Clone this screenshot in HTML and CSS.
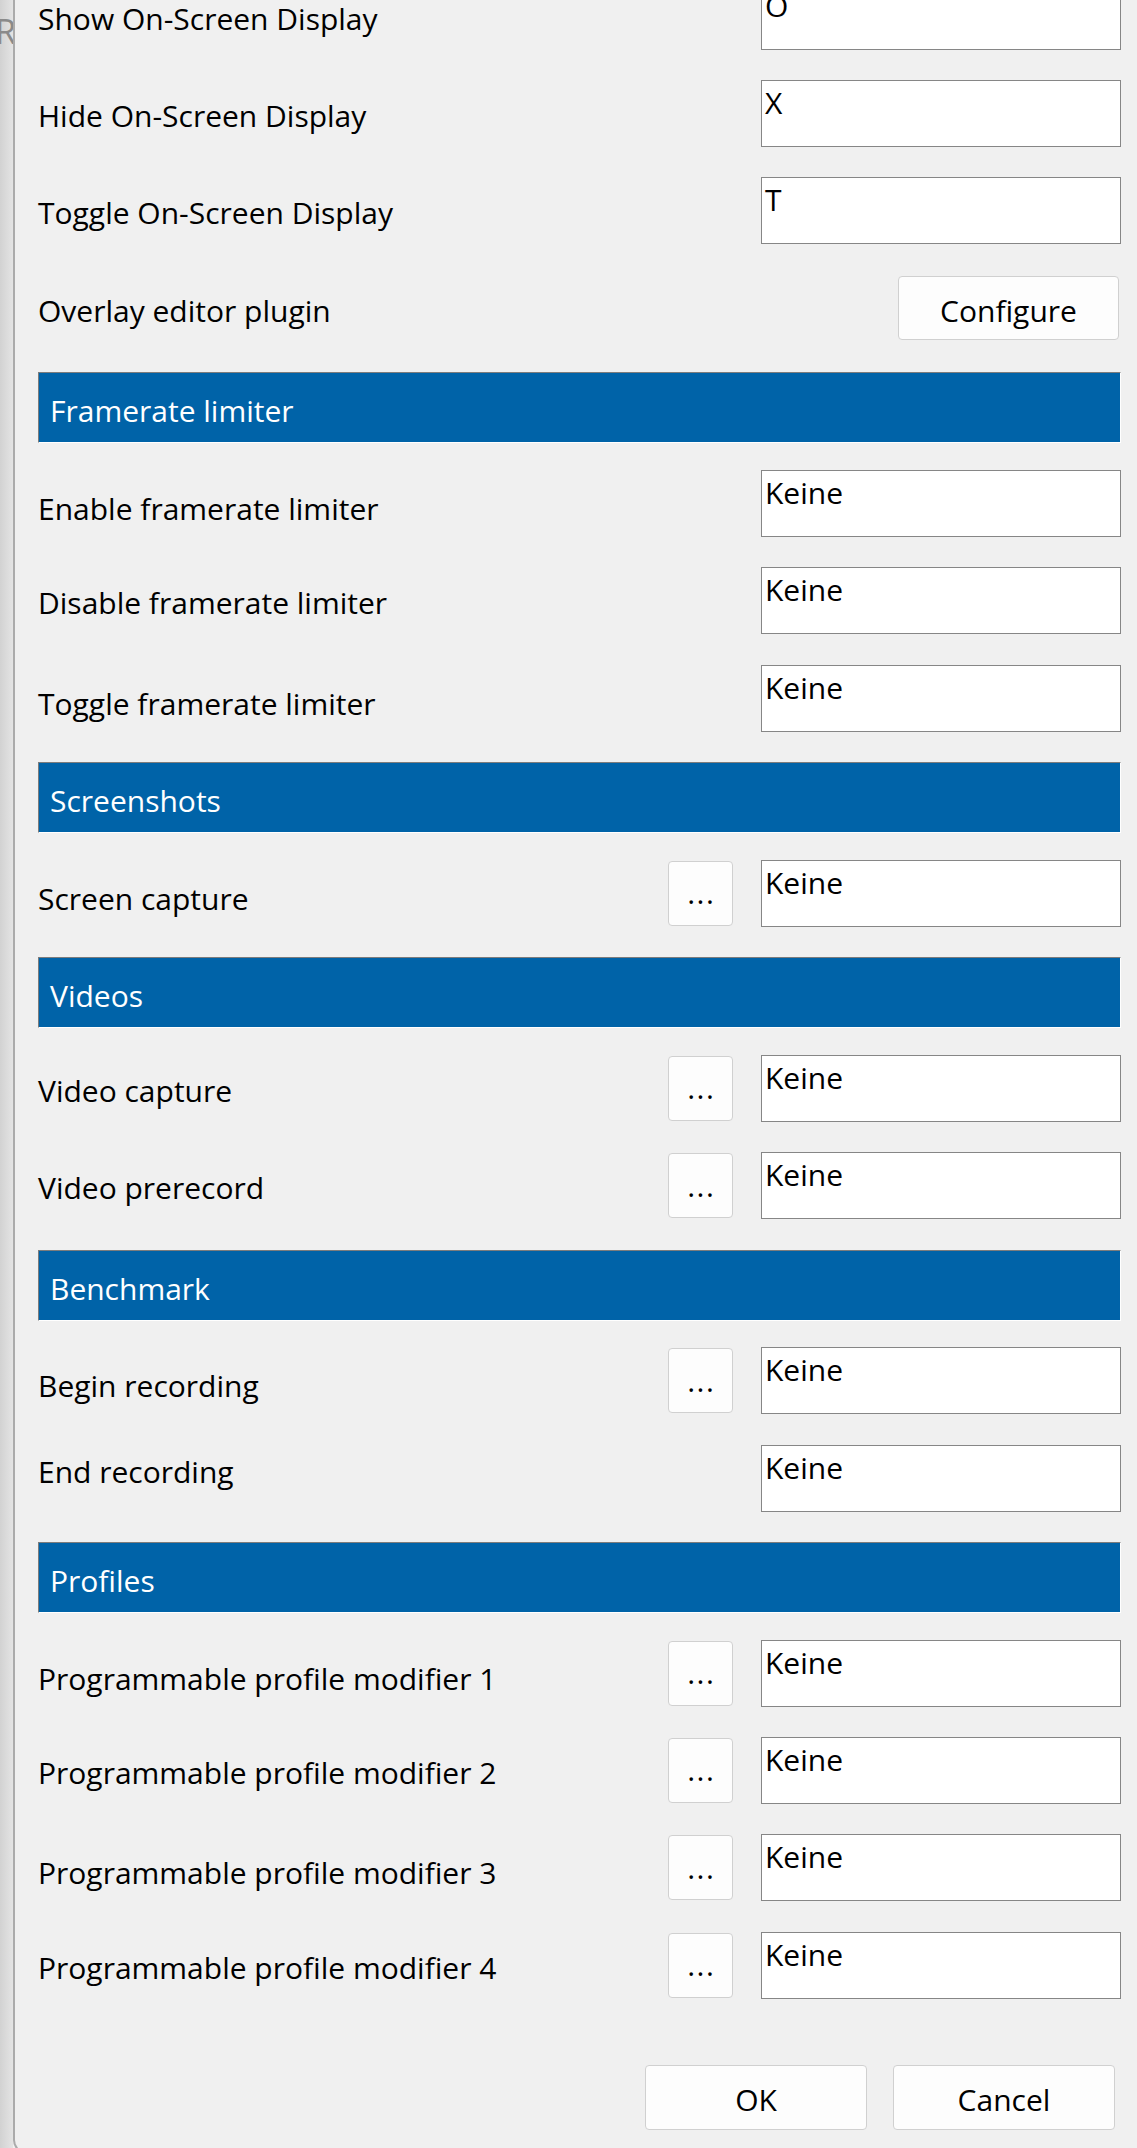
FILE: index.html
```html
<!DOCTYPE html>
<html lang="en">
<head>
<meta charset="utf-8">
<title>Hotkeys</title>
<link rel="stylesheet" href="styles.css">
</head>
<body>
<div class="screen">
  <div class="backwin"><span class="ghost">R</span></div>
  <div class="dialog">
    <div class="rows">
      <div class="row"><span class="label">Show On-Screen Display</span><div class="field">O</div></div>
      <div class="row"><span class="label">Hide On-Screen Display</span><div class="field">X</div></div>
      <div class="row"><span class="label">Toggle On-Screen Display</span><div class="field">T</div></div>
      <div class="row"><span class="label">Overlay editor plugin</span><button class="btn configure">Configure</button></div>

      <div class="header">Framerate limiter</div>
      <div class="row"><span class="label low">Enable framerate limiter</span><div class="field">Keine</div></div>
      <div class="row"><span class="label">Disable framerate limiter</span><div class="field">Keine</div></div>
      <div class="row"><span class="label low">Toggle framerate limiter</span><div class="field">Keine</div></div>

      <div class="header">Screenshots</div>
      <div class="row"><span class="label low">Screen capture</span><button class="btn more">...</button><div class="field">Keine</div></div>

      <div class="header">Videos</div>
      <div class="row"><span class="label">Video capture</span><button class="btn more">...</button><div class="field">Keine</div></div>
      <div class="row"><span class="label">Video prerecord</span><button class="btn more">...</button><div class="field">Keine</div></div>

      <div class="header">Benchmark</div>
      <div class="row"><span class="label low">Begin recording</span><button class="btn more">...</button><div class="field">Keine</div></div>
      <div class="row"><span class="label high">End recording</span><div class="field">Keine</div></div>

      <div class="header">Profiles</div>
      <div class="row"><span class="label low">Programmable profile modifier 1</span><button class="btn more">...</button><div class="field">Keine</div></div>
      <div class="row"><span class="label">Programmable profile modifier 2</span><button class="btn more">...</button><div class="field">Keine</div></div>
      <div class="row"><span class="label low">Programmable profile modifier 3</span><button class="btn more">...</button><div class="field">Keine</div></div>
      <div class="row"><span class="label">Programmable profile modifier 4</span><button class="btn more">...</button><div class="field">Keine</div></div>
    </div>
    <div class="footer">
      <button class="btn action">OK</button>
      <button class="btn action">Cancel</button>
    </div>
  </div>
</div>
</body>
</html>
```

FILE: styles.css
```css
* { box-sizing: border-box; }

html, body {
  margin: 0;
  padding: 0;
  background: #f0f0f0;
}

body {
  font-family: "Open Sans", "Noto Sans", sans-serif;
  font-size: 30px;
  letter-spacing: 0;
  color: #000;
}

.screen {
  display: flex;
  align-items: flex-start;
  width: 1137px;
  height: 2148px;
  overflow: hidden;
}

.backwin {
  width: 13px;
  height: 2148px;
  flex: none;
  background: linear-gradient(90deg, #d2d2d2, #e4e4e4);
  overflow: hidden;
}

.ghost {
  display: block;
  margin-top: 14px;
  margin-left: -5px;
  font-size: 34px;
  line-height: 34px;
  color: #8a8a8a;
}

.dialog {
  flex: 1;
  height: 2154px;
  background: #f0f0f0;
  border-left: 2px solid #ababab;
  border-bottom: 2px solid #ababab;
  border-bottom-left-radius: 14px;
  padding: 0 16px 0 23px;
}

.rows {
  display: flex;
  flex-direction: column;
  gap: 30.47px;
  margin-top: -17.47px;
}

.row {
  display: flex;
  align-items: center;
  height: 67px;
}

.label {
  flex: 1;
  line-height: 30px;
  padding-top: 5px;
  white-space: nowrap;
}

.label.low { padding-top: 11px; }
.label.high { padding-top: 0; margin-top: -12px; }

.field {
  width: 360px;
  height: 67px;
  flex: none;
  background: #fff;
  border: 1px solid #868686;
  padding: 7px 3px 0;
  line-height: 30px;
}

.btn {
  font: inherit;
  letter-spacing: inherit;
  color: #000;
  background: #fdfdfd;
  border: 1px solid #d0d0d0;
  border-radius: 4px;
  padding: 5px 0 0;
  line-height: 30px;
  flex: none;
}

.btn.more {
  width: 65px;
  height: 65px;
  margin-right: 28px;
  padding-top: 0;
  letter-spacing: 1.5px;
  text-indent: 1.5px;
}

.btn.configure {
  width: 221px;
  height: 64px;
  margin-right: 2px;
}

.header {
  height: 71px;
  margin-bottom: -4px;
  background: #0063a8;
  color: #fff;
  border-top: 1px solid #7c7c7c;
  border-left: 1px solid #7c7c7c;
  border-right: 1px solid #ffffff;
  border-bottom: 1px solid #ffffff;
  padding: 23px 12px 0 11px;
  line-height: 30px;
}

.footer {
  display: flex;
  justify-content: flex-end;
  gap: 26px;
  margin-top: 66px;
  padding-right: 6px;
}

.btn.action {
  width: 222px;
  height: 65px;
}
```
